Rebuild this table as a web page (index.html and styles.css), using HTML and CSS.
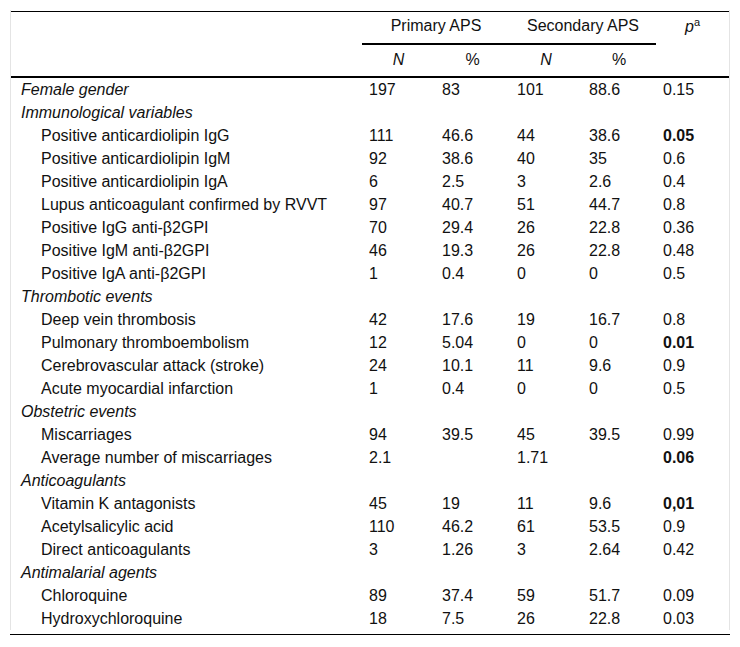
FILE: index.html
```html
<!DOCTYPE html>
<html lang="en">
<head>
<meta charset="utf-8">
<title>APS table</title>
<link rel="stylesheet" href="styles.css">
</head>
<body>
<div class="wrap">
<table class="data">
<colgroup>
<col class="c-label"><col class="c-n1"><col class="c-p1"><col class="c-n2"><col class="c-p2"><col class="c-p">
</colgroup>
<thead>
<tr class="h1">
<th class="blank" rowspan="2"></th>
<th class="grp" colspan="2">Primary APS</th>
<th class="grp" colspan="2">Secondary APS</th>
<th class="pcol" rowspan="2"><i>p</i><sup>a</sup></th>
</tr>
<tr class="h2">
<th><i>N</i></th><th>%</th><th><i>N</i></th><th>%</th>
</tr>
</thead>
<tbody>
<tr><td class="sec">Female gender</td><td>197</td><td>83</td><td>101</td><td>88.6</td><td>0.15</td></tr>
<tr><td class="sec">Immunological variables</td><td></td><td></td><td></td><td></td><td></td></tr>
<tr><td class="sub">Positive anticardiolipin IgG</td><td>111</td><td>46.6</td><td>44</td><td>38.6</td><td><b>0.05</b></td></tr>
<tr><td class="sub">Positive anticardiolipin IgM</td><td>92</td><td>38.6</td><td>40</td><td>35</td><td>0.6</td></tr>
<tr><td class="sub">Positive anticardiolipin IgA</td><td>6</td><td>2.5</td><td>3</td><td>2.6</td><td>0.4</td></tr>
<tr><td class="sub">Lupus anticoagulant confirmed by RVVT</td><td>97</td><td>40.7</td><td>51</td><td>44.7</td><td>0.8</td></tr>
<tr><td class="sub">Positive IgG anti-β2GPI</td><td>70</td><td>29.4</td><td>26</td><td>22.8</td><td>0.36</td></tr>
<tr><td class="sub">Positive IgM anti-β2GPI</td><td>46</td><td>19.3</td><td>26</td><td>22.8</td><td>0.48</td></tr>
<tr><td class="sub">Positive IgA anti-β2GPI</td><td>1</td><td>0.4</td><td>0</td><td>0</td><td>0.5</td></tr>
<tr><td class="sec">Thrombotic events</td><td></td><td></td><td></td><td></td><td></td></tr>
<tr><td class="sub">Deep vein thrombosis</td><td>42</td><td>17.6</td><td>19</td><td>16.7</td><td>0.8</td></tr>
<tr><td class="sub">Pulmonary thromboembolism</td><td>12</td><td>5.04</td><td>0</td><td>0</td><td><b>0.01</b></td></tr>
<tr><td class="sub">Cerebrovascular attack (stroke)</td><td>24</td><td>10.1</td><td>11</td><td>9.6</td><td>0.9</td></tr>
<tr><td class="sub">Acute myocardial infarction</td><td>1</td><td>0.4</td><td>0</td><td>0</td><td>0.5</td></tr>
<tr><td class="sec">Obstetric events</td><td></td><td></td><td></td><td></td><td></td></tr>
<tr><td class="sub">Miscarriages</td><td>94</td><td>39.5</td><td>45</td><td>39.5</td><td>0.99</td></tr>
<tr><td class="sub">Average number of miscarriages</td><td>2.1</td><td></td><td>1.71</td><td></td><td><b>0.06</b></td></tr>
<tr><td class="sec">Anticoagulants</td><td></td><td></td><td></td><td></td><td></td></tr>
<tr><td class="sub">Vitamin K antagonists</td><td>45</td><td>19</td><td>11</td><td>9.6</td><td><b>0,01</b></td></tr>
<tr><td class="sub">Acetylsalicylic acid</td><td>110</td><td>46.2</td><td>61</td><td>53.5</td><td>0.9</td></tr>
<tr><td class="sub">Direct anticoagulants</td><td>3</td><td>1.26</td><td>3</td><td>2.64</td><td>0.42</td></tr>
<tr><td class="sec">Antimalarial agents</td><td></td><td></td><td></td><td></td><td></td></tr>
<tr><td class="sub">Chloroquine</td><td>89</td><td>37.4</td><td>59</td><td>51.7</td><td>0.09</td></tr>
<tr><td class="sub">Hydroxychloroquine</td><td>18</td><td>7.5</td><td>26</td><td>22.8</td><td>0.03</td></tr>
</tbody>
</table>
</div>
<div class="endrule"></div>
</body>
</html>
```

FILE: styles.css
```css
html, body {
  margin: 0;
  padding: 0;
  background: #ffffff;
}

body {
  font-family: "Liberation Sans", Arial, sans-serif;
  font-size: 16px;
  color: #111111;
}

.wrap {
  margin: 10px 10px 0 10px;
  padding-top: 1px;
  border-left: 1px solid #e4e4e4;
  border-right: 1px solid #e4e4e4;
}

.data {
  width: 100%;
  border-collapse: separate;
  border-spacing: 0;
  border-top: 1px solid #000;
  table-layout: fixed;
}

.c-label { width: 351px; }
.c-n1 { width: 73px; }
.c-p1 { width: 75px; }
.c-n2 { width: 72px; }
.c-p2 { width: 74px; }
.c-p { width: 73px; }

.data th,
.data td {
  line-height: 17px;
  padding: 0;
  font-weight: normal;
}

.data th {
  text-align: center;
}

.h1 th {
  padding-top: 5px;
  padding-bottom: 9px;
}

.h1 .grp {
  border-bottom: 2px solid #000;
}

.h1 .blank,
.h1 .pcol {
  vertical-align: top;
  border-bottom: 2px solid #000;
}

.h1 .pcol {
  padding-top: 6px;
}

.pcol sup {
  font-size: 11px;
  line-height: 0;
  vertical-align: 6px;
}

.h2 th {
  padding-top: 6px;
  padding-bottom: 8px;
  border-bottom: 2px solid #000;
}

.data td {
  padding: 3px 2px 3px 7px;
  text-align: left;
  white-space: nowrap;
}

.data td.sec {
  padding-left: 10px;
  font-style: italic;
}

.data td.sub {
  padding-left: 30px;
}

.data td b {
  font-weight: bold;
}

.endrule {
  margin: 4px 10px 0 10px;
  border-top: 1px solid #000;
}
```
